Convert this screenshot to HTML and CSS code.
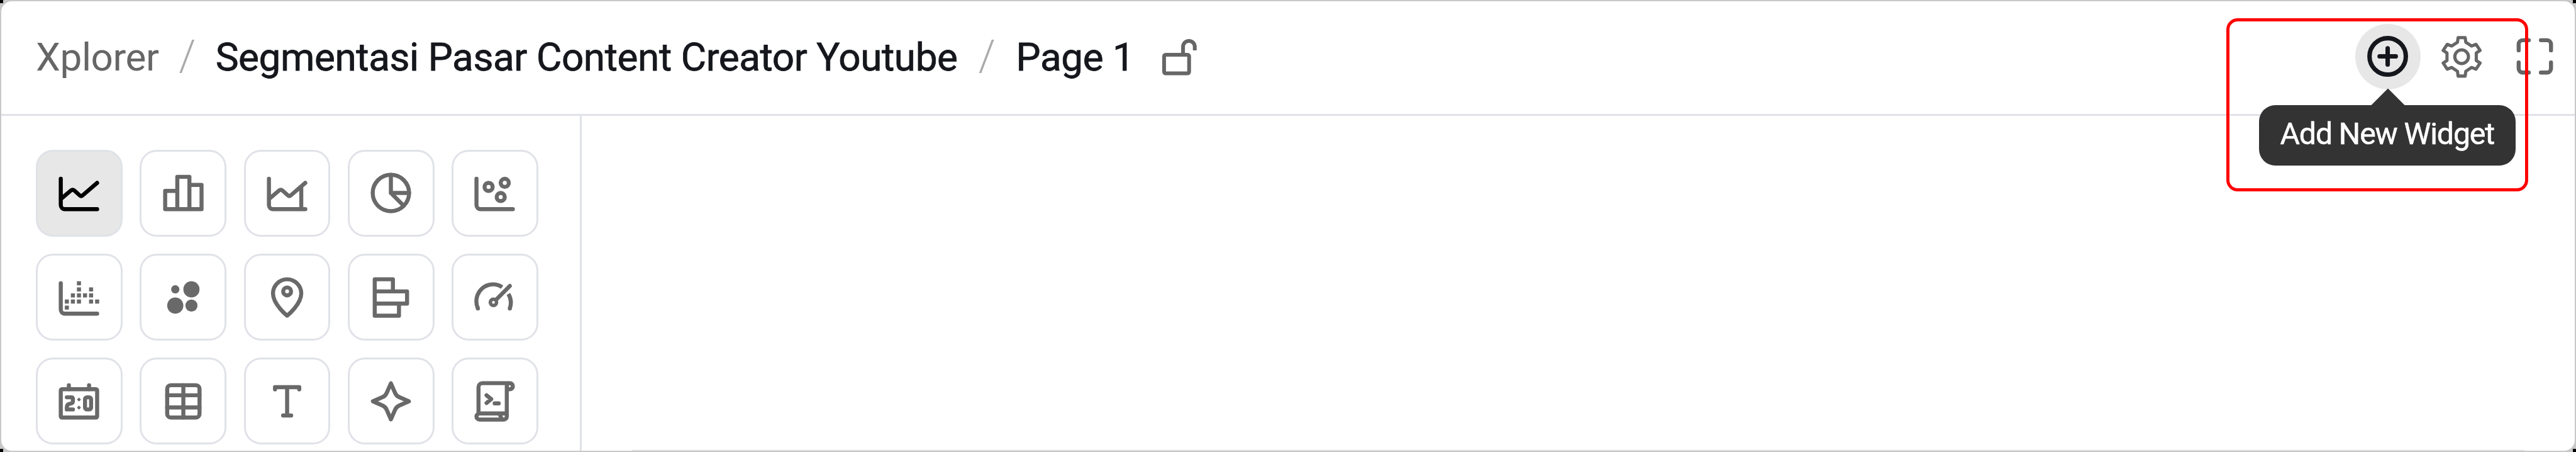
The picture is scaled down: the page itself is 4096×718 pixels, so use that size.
FILE: index.html
```html
<!DOCTYPE html>
<html lang="id">
<head>
<meta charset="utf-8">
<title>Xplorer</title>
<link rel="stylesheet" href="styles.css">
</head>
<body>
<div class="frame">
  <header class="header">
    <nav class="crumbs">
      <span class="crumb-root">Xplorer</span>
      <span class="slash">/</span>
      <span class="crumb-title">Segmentasi Pasar Content Creator Youtube</span>
      <span class="slash slash-wide">/</span>
      <span class="crumb-page">Page 1</span>
      <svg class="lock" viewBox="3063 102 92 96"><rect x="3068" y="143.5" width="66" height="49" rx="4"/><path d="M3118 143v-20.500a15.500 15.500 0 0 1 31 0v9.500"/></svg>
    </nav>
    <div class="actions">
      <button class="action action-active">
        <svg class="icon" viewBox="0 0 24 24"><circle cx="12" cy="12" r="9"/><path d="M8 12h8M12 8v8"/></svg>
        <span class="tooltip">Add New Widget</span>
      </button>
      <button class="action">
        <svg class="gear" viewBox="-180 -180 360 360"><circle r="54"/><path d="M-28-151H28L33-115L79-85L114-98L146-50L116-30V30L146 50L114 98L79 85L33 115L28 153H-28L-33 115L-79 85L-114 98L-146 50L-116 30V-30L-146-50L-114-98L-79-85L-33-115Z"/></svg>
      </button>
      <button class="action">
        <svg class="icon" viewBox="0 0 24 24"><path d="M4 9V6a2 2 0 0 1 2-2h3M15 4h3a2 2 0 0 1 2 2v3M20 15v3a2 2 0 0 1-2 2h-3M9 20H6a2 2 0 0 1-2-2v-3"/></svg>
      </button>
    </div>
  </header>
  <div class="body">
    <aside class="palette">
      <button class="tile tile-active"><svg class="icon" viewBox="0 0 24 24"><path d="M3 5v13a2 2 0 0 0 2 2h16M3 15L8.100 10.700Q8.900 10.100 9.700 10.800L12.400 13.200Q13.100 13.800 13.800 13.200L21 7"/></svg></button>
      <button class="tile"><svg class="icon" viewBox="0 0 24 24"><path d="M9 4h6v16H9zM9 11H3v9h6M15 8h6v12h-6"/></svg></button>
      <button class="tile"><svg class="icon" viewBox="0 0 24 24"><path d="M3 5v13a2 2 0 0 0 2 2h16M3 15L8.100 10.700Q8.900 10.100 9.700 10.800L12.400 13.200Q13.100 13.800 13.800 13.200L21 7M19 9v11"/></svg></button>
      <button class="tile"><svg class="icon" viewBox="0 0 24 24"><circle cx="12" cy="12" r="9"/><path d="M12 3v9h9M12 12l6.300 6.300"/></svg></button>
      <button class="tile"><svg class="icon" viewBox="0 0 24 24"><path d="M3 5v13a2 2 0 0 0 2 2h16"/><circle cx="9" cy="9" r="2"/><circle cx="17" cy="7" r="2"/><circle cx="15" cy="14" r="2"/></svg></button>

      <button class="tile"><svg class="icon" viewBox="0 0 24 24"><path d="M3 5v13a2 2 0 0 0 2 2h16"/><path class="solid" d="M11 4h2v2h-2zM11 7h2v2h-2zM17 7h2v2h-2zM8 10h2v2H8zM11 10h2v2h-2zM14 10h2v2h-2zM17 10h2v2h-2zM5 13h2v2H5zM8 13h2v2H8zM11 13h2v2h-2zM17 13h2v2h-2zM20 13h2v2h-2zM5 16h2v2H5z"/></svg></button>
      <button class="tile"><svg class="icon" viewBox="0 0 24 24"><g class="solid"><circle cx="8" cy="8" r="2.050"/><circle cx="16" cy="8" r="4"/><circle cx="8" cy="16" r="4"/><circle cx="16" cy="16" r="3"/></g></svg></button>
      <button class="tile"><svg class="icon" viewBox="0 0 24 24"><path d="M12 21S19 15.500 19 10A7 7 0 0 0 5 10C5 15.500 12 21 12 21z"/><circle cx="12" cy="9" r="1.950"/></svg></button>
      <button class="tile"><svg class="icon" viewBox="0 0 24 24"><path d="M4 3h9v6H4zM4 9h16v6H4zM4 15h12v6H4z"/></svg></button>
      <button class="tile"><svg class="icon" viewBox="0 0 24 24"><circle class="thin" cx="11.400" cy="14.400" r="1.550"/><path d="M12.900 12.900L19.500 6.300"/><path class="butt" d="M3.700 17.400A8.200 8.400 0 0 1 15.700 6.900M18.800 10.200A8.200 8.400 0 0 1 19.500 17.400"/><path d="M3.700 17.400v.01M19.500 17.400v.01"/></svg></button>

      <button class="tile"><svg class="icon" viewBox="0 0 24 24"><rect x="3" y="6" width="18" height="14" rx=".6"/><path d="M7 4v2M17 4v2M6 10h2.200Q9 10 9 10.800V12Q9 13 7.800 13.100Q6 13.400 6 14.800V16h3"/><rect x="15" y="10" width="3" height="6" rx="1"/><path class="solid" d="M12 10.100l1 1-1 1-1-1zM12 14.100l1 1-1 1-1-1z"/></svg></button>
      <button class="tile"><svg class="icon" viewBox="0 0 24 24"><rect x="4" y="4" width="16" height="16" rx="1.800"/><path d="M12 4v16M4 9h16M4 15h16"/></svg></button>
      <button class="tile"><svg class="icon" viewBox="0 0 24 24"><path d="M6 6.100V5h12v1.100M12 5v14M10 19h4"/></svg></button>
      <button class="tile"><svg class="icon" viewBox="0 0 24 24"><path d="M12 3.100L9.900 7.900Q9.300 9.300 7.900 9.900L3.100 12L7.900 14.100Q9.300 14.700 9.900 16.100L12 20.900L14.100 16.100Q14.700 14.700 16.100 14.100L20.900 12L16.100 9.900Q14.700 9.300 14.100 7.900Z"/></svg></button>
      <button class="tile"><svg class="icon" viewBox="0 0 24 24"><path d="M4 18V5a2 2 0 0 1 2-2h13.500a1.500 1.500 0 0 1 0 3H18M18 4.500v15a1.500 1.500 0 0 1-1.500 1.500h-12a1.500 1.500 0 0 1 0-3H18M18 4.500A1.500 1.500 0 0 1 19.500 3M16.500 21A1.500 1.500 0 0 1 15 19.500L14.500 18.500M8 9l2.300 1.900L8 12.800M12 13h2"/></svg></button>
    </aside>
    <main class="canvas"><div class="canvas-card"></div></main>
  </div>
  <div class="highlight"></div>
</div>
</body>
</html>
```
FILE: styles.css
```css
* { box-sizing: border-box; }
body {
  margin: 0;
  font-family: Roboto, sans-serif;
  background:
    linear-gradient(#000, #000) 0 0 / 5px 5px no-repeat,
    linear-gradient(#000, #000) 100% 0 / 5px 5px no-repeat,
    linear-gradient(#000, #000) 0 100% / 5px 5px no-repeat,
    linear-gradient(#000, #000) 100% 100% / 5px 5px no-repeat,
    #c8c8c8;
}
button { font: inherit; margin: 0; padding: 0; border: 0; background: none; color: inherit; }
svg { display: block; flex: none; fill: none; stroke: currentColor; stroke-width: 2; stroke-linecap: round; stroke-linejoin: round; }
.frame { position: relative; width: 4096px; height: 718px; border: 2px solid #c8c8c8; border-radius: 19px; background: #fff; overflow: hidden; display: flex; flex-direction: column; }
.header { flex: none; height: 182px; border-bottom: 3px solid #e0e2e8; padding: 0 11px 3px 55px; display: flex; align-items: center; justify-content: space-between; color: #666; }
.crumbs { display: flex; align-items: baseline; font-size: 62px; line-height: 74px; letter-spacing: -0.4px; white-space: nowrap; }
.crumb-title, .crumb-page { color: #15171c; -webkit-text-stroke: 0.8px #15171c; }
.slash { width: 90px; text-align: center; font-size: 68px; font-weight: 300; color: #aaa; }
.slash-wide { width: 93px; }
.lock { width: 55.4px; height: 57.8px; margin-left: 44px; stroke-width: 10; stroke-linecap: butt; position: relative; top: 8px; }
.actions { display: flex; gap: 13px; }
.action { position: relative; width: 104px; height: 104px; border-radius: 50%; display: flex; align-items: center; justify-content: center; }
.action-active { background: #e7e7e7; color: #15171c; }
.action-active .icon { stroke-width: 2.2; }
.icon { width: 77.1px; height: 77.1px; }
.gear { width: 72.3px; height: 72.3px; stroke-width: 25; stroke-linejoin: round; }
.tooltip { position: absolute; z-index: 2; top: 128.500px; left: -153.500px; width: 408.500px; height: 96px; border-radius: 26px; background: #333; color: #fff; -webkit-text-stroke: 0.6px #fff; font-size: 48.2px; letter-spacing: -1.1px; line-height: 92px; text-align: center; white-space: nowrap; }
.tooltip::before { content: ""; position: absolute; left: 178.500px; top: -26px; width: 54px; height: 27px; background: #333; clip-path: polygon(50% 0, 100% 100%, 0 100%); }
.body { flex: 1; min-height: 0; display: flex; }
.palette { flex: none; width: 922.500px; border-right: 3px solid #e0e2e8; padding: 54px 0 0 55.2px; display: grid; grid-template-columns: repeat(5, 137.7px); grid-auto-rows: 137.7px; gap: 27.550px; align-content: start; color: #696969; }
.tile { border: 3px solid #e0e2e8; border-radius: 27px; display: flex; align-items: center; justify-content: center; }
.tile-active { background: #e7e7e7; color: #000; border-color: #dfe2e7; }
.solid { fill: currentColor; stroke: none; }
.thin { stroke-width: 1.7; }
.butt { stroke-linecap: butt; }
.canvas { flex: 1; display: flex; align-items: flex-end; padding: 0 80px; }
.canvas-card { flex: 1; height: 1px; background: #e2e2e2; box-shadow: 0 0 2px rgba(0, 0, 0, .15); }
.highlight { position: absolute; z-index: 3; left: 3537.500px; top: 27px; width: 480px; height: 275px; border: 5px solid #f00; border-radius: 18px; }
```
